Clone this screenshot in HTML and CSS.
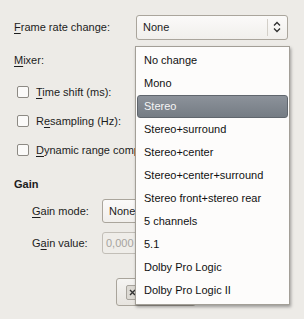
FILE: index.html
```html
<!DOCTYPE html>
<html lang="en">
<head>
    <meta charset="UTF-8">
    <meta name="viewport" content="width=device-width, initial-scale=1.0">
    <title>Audio settings</title>
    <link rel="stylesheet" href="styles.css">
</head>
<body>
    <div class="dialog">
        <div class="row-top">
            <span class="label-wide"><u>F</u>rame rate change:</span>
            <div class="combo combo-main">
                <span class="combo-text">None</span>
                <span class="combo-sep"></span>
                <svg class="combo-arrow" width="8" height="12" viewBox="0 0 8 12">
                    <path d="M1 4.5 L4 1.5 L7 4.5 M1 7.5 L4 10.5 L7 7.5" fill="none" stroke="#2e2e2e" stroke-width="1.3"/>
                </svg>
            </div>
        </div>

        <div class="section-label"><u>M</u>ixer:</div>

        <div class="check-list">
            <label class="check-row"><span class="check"></span><span><u>T</u>ime shift (ms):</span></label>
            <label class="check-row"><span class="check"></span><span>R<u>e</u>sampling (Hz):</span></label>
            <label class="check-row"><span class="check"></span><span><u>D</u>ynamic range compression</span></label>
        </div>

        <div class="group-title">Gain</div>

        <div class="field-row field-mode">
            <span class="label-field"><u>G</u>ain mode:</span>
            <div class="combo combo-small"><span class="combo-text">None</span></div>
        </div>
        <div class="field-row field-value">
            <span class="label-field">G<u>a</u>in value:</span>
            <div class="entry">0,000</div>
        </div>

        <div class="button-row">
            <button class="btn">
                <span class="btn-icon">
                    <svg width="9" height="9" viewBox="0 0 9 9">
                        <path d="M2 2 L7 7 M7 2 L2 7" stroke="#333" stroke-width="1.4"/>
                    </svg>
                </span>
            </button>
        </div>
    </div>

    <ul class="popup">
        <li>No change</li>
        <li>Mono</li>
        <li class="selected">Stereo</li>
        <li>Stereo+surround</li>
        <li>Stereo+center</li>
        <li>Stereo+center+surround</li>
        <li>Stereo front+stereo rear</li>
        <li>5 channels</li>
        <li>5.1</li>
        <li>Dolby Pro Logic</li>
        <li>Dolby Pro Logic II</li>
    </ul>
</body>
</html>
```

FILE: styles.css
```css
body {
    margin: 0;
    background: #edebe7;
    font-family: "Liberation Sans", Arial, sans-serif;
    font-size: 11px;
    color: #1c1c1c;
    overflow: hidden;
}
u {
    text-decoration: underline;
    text-underline-offset: 2px;
}
.dialog {
    padding: 15px 0 0 14px;
}
.row-top {
    display: flex;
    align-items: center;
    height: 24px;
}
.label-wide {
    width: 122px;
}
.combo {
    display: flex;
    align-items: center;
    box-sizing: border-box;
    border: 1px solid #aaa59c;
    border-radius: 3px;
    background: linear-gradient(#fbfaf9, #f1efec);
}
.combo-main {
    width: 152px;
    height: 25px;
    padding-left: 6px;
}
.combo-text {
    flex: 1;
}
.combo-sep {
    width: 1px;
    height: 17px;
    background: #d3cfc8;
    margin-right: 5px;
}
.combo-arrow {
    margin-right: 6px;
}
.section-label {
    margin-top: 15px;
    height: 13px;
    line-height: 13px;
}
.check-list {
    margin-top: 10px;
    padding-left: 3px;
    width: 118px;
    overflow: hidden;
}
.check-row {
    display: flex;
    align-items: center;
    height: 29px;
    white-space: nowrap;
}
.check {
    flex: none;
    width: 12px;
    height: 12px;
    box-sizing: border-box;
    border: 1px solid #8d8a84;
    border-radius: 2px;
    background: #fbfaf9;
    margin-right: 7px;
}
.group-title {
    margin-top: 14px;
    height: 13px;
    line-height: 13px;
    font-weight: bold;
}
.field-row {
    display: flex;
    align-items: center;
    padding-left: 18px;
}
.field-mode {
    margin-top: 8px;
}
.field-value {
    margin-top: 9px;
}
.label-field {
    width: 70px;
}
.combo-small {
    width: 110px;
    height: 24px;
    padding-left: 6px;
}
.entry {
    box-sizing: border-box;
    width: 110px;
    height: 22px;
    line-height: 20px;
    padding-left: 3px;
    border: 1px solid #c2beb7;
    border-radius: 3px;
    background: #efede9;
    color: #a6a39e;
}
.button-row {
    margin-top: 24px;
    padding-left: 102px;
}
.btn {
    display: flex;
    align-items: center;
    height: 28px;
    width: 80px;
    padding: 0 9px;
    border: 1px solid #a9a49b;
    border-radius: 3px;
    background: linear-gradient(#f5f4f2, #e7e4df);
    font: inherit;
    color: inherit;
}
.btn-icon {
    display: flex;
    align-items: center;
    justify-content: center;
    width: 12px;
    height: 15px;
    box-sizing: border-box;
    border: 1px solid #a8a49d;
    border-radius: 2px;
    background: #dcd9d3;
}
.popup {
    position: absolute;
    left: 135px;
    top: 46px;
    width: 155px;
    box-sizing: border-box;
    margin: 0;
    padding: 2px 1px 2px 1px;
    list-style: none;
    background: #fdfcfb;
    border: 1px solid #a39f97;
    box-shadow: 1px 2px 3px rgba(0, 0, 0, 0.35);
    color: #111;
}
.popup li {
    height: 23px;
    line-height: 23px;
    padding-left: 7px;
    white-space: nowrap;
}
.popup .selected {
    box-sizing: border-box;
    line-height: 21px;
    padding-left: 6px;
    border: 1px solid #60666d;
    border-radius: 3px;
    background: linear-gradient(#8c929a, #757c84);
    color: #f5f5f5;
}
```
